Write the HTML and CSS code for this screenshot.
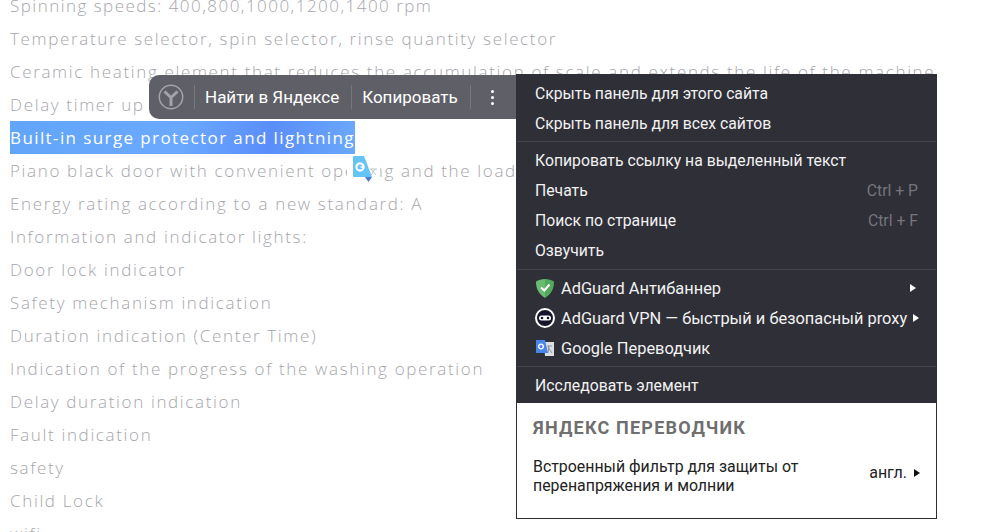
FILE: index.html
```html
<!DOCTYPE html>
<html lang="en">
<head>
<meta charset="utf-8">
<title>Washing machine features</title>
<link rel="stylesheet" href="styles.css">
</head>
<body>
<ul class="features">
<li><span class="tight">Spinning speeds: 400,800,1000,1200,1400 rpm</span></li>
<li>Temperature selector, spin selector, rinse quantity selector</li>
<li>Ceramic heating element that reduces the accumulation of scale and extends the life of the machine</li>
<li>Delay timer up to 24 hours</li>
<li><span class="selected">Built-in surge protector and lightning</span></li>
<li>Piano black door with convenient opening and the loading</li>
<li>Energy rating according to a new standard: A</li>
<li>Information and indicator lights:</li>
<li>Door lock indicator</li>
<li>Safety mechanism indication</li>
<li>Duration indication (Center Time)</li>
<li>Indication of the progress of the washing operation</li>
<li>Delay duration indication</li>
<li>Fault indication</li>
<li>safety</li>
<li>Child Lock</li>
<li>wifi</li>
</ul>

<div class="toolbar">
  <svg class="ya-logo" width="26" height="26" viewBox="0 0 26 26" aria-hidden="true">
    <circle cx="13" cy="13" r="11.7" fill="none" stroke="#a3a3a8" stroke-width="1.5"/>
    <path d="M6.5 7.5 L13 13.5 L19.5 7.5 M13 13.5 V22" fill="none" stroke="#a3a3a8" stroke-width="3"/>
  </svg>
  <span class="tool-sep"></span>
  <span class="tool-btn">Найти в Яндексе</span>
  <span class="tool-sep"></span>
  <span class="tool-btn">Копировать</span>
  <span class="tool-sep"></span>
  <span class="tool-dots"><i></i><i></i><i></i></span>
</div>

<svg class="gt-float" width="33" height="27" viewBox="-6 0 33 27" aria-hidden="true">
  <rect x="-6" y="0" width="33" height="27" fill="#fff"/>
  <path d="M0 1 Q0 0 1 0 H11 L19 21 H1 Q0 21 0 20 Z" fill="#63c4f5"/>
  <circle cx="7" cy="11" r="3.6" fill="none" stroke="#fff" stroke-width="2.2"/>
  <path d="M7.5 11 H11" stroke="#fff" stroke-width="1.5"/>
  <path d="M17 13 H24 M18 19 L22 13 M18 13 L23 19" stroke="#b9c4cc" stroke-width="1" fill="none"/>
  <path d="M12 21 H19 L15.5 26 Z" fill="#4f76d9"/>
</svg>

<div class="menu">
  <div class="menu-group">
    <div class="item">Скрыть панель для этого сайта</div>
    <div class="item">Скрыть панель для всех сайтов</div>
  </div>
  <div class="menu-group group-tall">
    <div class="item">Копировать ссылку на выделенный текст</div>
    <div class="item"><span>Печать</span><span class="shortcut">Ctrl + P</span></div>
    <div class="item"><span>Поиск по странице</span><span class="shortcut">Ctrl + F</span></div>
    <div class="item">Озвучить</div>
  </div>
  <div class="menu-group">
    <div class="item with-icon">
      <svg class="ico" width="20" height="20" viewBox="0 0 20 20" aria-hidden="true">
        <path d="M10 1 C6.5 1 3.5 2 1 3.5 C1 10 3 15.5 10 20 Z" fill="#68bc71"/>
        <path d="M10 1 C13.5 1 16.5 2 19 3.5 C19 10 17 15.5 10 20 Z" fill="#52a85c"/>
        <path d="M6 9.5 L9.3 12.5 L14.5 6.5" fill="none" stroke="#fff" stroke-width="2"/>
      </svg>
      <span class="grow">AdGuard Антибаннер</span><span class="arrow"></span>
    </div>
    <div class="item with-icon">
      <svg class="ico" width="20" height="20" viewBox="0 0 20 20" aria-hidden="true">
        <circle cx="10" cy="10" r="9" fill="#14142a" stroke="#fff" stroke-width="2"/>
        <rect x="4" y="7.5" width="12" height="5" rx="2.5" fill="#fff"/>
        <circle cx="7" cy="10" r="1.3" fill="#14142a"/>
        <circle cx="13" cy="10" r="1.3" fill="#14142a"/>
      </svg>
      <span class="grow">AdGuard VPN — быстрый и безопасный proxy</span><span class="arrow"></span>
    </div>
    <div class="item with-icon">
      <svg class="ico" width="20" height="20" viewBox="0 0 20 20" aria-hidden="true">
        <path d="M9 4 H19 V18 H10 Z" fill="#dcdfe2"/>
        <path d="M12 8 H17 M14 8 L13 15 M13 9 L17 15" stroke="#8c9499" stroke-width="1" fill="none"/>
        <path d="M1 2 H10 L13 15 H1 Z" fill="#4a86e8"/>
        <circle cx="6" cy="8.5" r="2.3" fill="none" stroke="#fff" stroke-width="1.3"/>
      </svg>
      <span class="grow">Google Переводчик</span>
    </div>
  </div>
  <div class="menu-group group-last">
    <div class="item">Исследовать элемент</div>
  </div>
  <div class="translator">
    <div class="tr-title">ЯНДЕКС ПЕРЕВОДЧИК</div>
    <div class="tr-body">
      <div class="tr-text">Встроенный фильтр для защиты от перенапряжения и молнии</div>
      <div class="tr-lang">англ.<span class="arrow arrow-dark"></span></div>
    </div>
  </div>
</div>
</body>
</html>
```

FILE: styles.css
```css
html, body {
  margin: 0;
  padding: 0;
  height: 532px;
  overflow: hidden;
  background: #fff;
}

.features {
  list-style: none;
  margin: -11px 0 0;
  padding: 0 0 0 10px;
  font-family: "Open Sans", sans-serif;
  font-size: 17px;
  font-weight: 300;
  line-height: 33px;
  letter-spacing: 1.65px;
  color: #a6a6ac;
  white-space: nowrap;
}

.tight { letter-spacing: 1.47px; }

.selected {
  display: inline-block;
  height: 33px;
  font-weight: 400;
  letter-spacing: 1.4px;
  color: #fff;
  background: linear-gradient(100deg, #62a5f8 0%, #6aa9ff 50%, #5a8dfa 75%, #6aa9fb 100%);
}

.toolbar {
  position: absolute;
  left: 149px;
  top: 75px;
  width: 367px;
  height: 44px;
  box-sizing: border-box;
  display: flex;
  align-items: center;
  padding-left: 9px;
  background: #5f5f67;
  border-radius: 10px 0 0 10px;
  font-family: Roboto, sans-serif;
  font-size: 17px;
  color: #fff;
}

.ya-logo { flex: none; }

.tool-sep {
  width: 1px;
  height: 24px;
  background: #77777e;
  margin-left: 10px;
}

.tool-btn {
  margin-left: 10px;
  padding-right: 2px;
  white-space: nowrap;
}

.tool-dots {
  display: flex;
  flex-direction: column;
  gap: 3px;
  margin-left: 20px;
}

.tool-dots i {
  display: block;
  width: 3px;
  height: 3px;
  background: #fff;
  border-radius: 50%;
}

.gt-float {
  position: absolute;
  left: 347px;
  top: 156px;
}

.menu {
  position: absolute;
  left: 516px;
  top: 74px;
  width: 421px;
  height: 445px;
  box-sizing: border-box;
  display: flex;
  flex-direction: column;
  border: 1px solid #2f2f38;
  background: #2f2f38;
  font-family: Roboto, sans-serif;
  font-size: 15.75px;
  color: #f2f2f2;
}

.menu-group {
  padding: 3px 0;
  border-bottom: 1px solid #45454e;
}

.group-tall { padding-bottom: 4px; }
.group-last { border-bottom: none; }

.item {
  height: 30px;
  display: flex;
  align-items: center;
  justify-content: space-between;
  padding: 0 18px;
  white-space: nowrap;
}

.with-icon { justify-content: flex-start; gap: 6px; font-size: 16.4px; }
.grow { flex: 1; }
.ico { flex: none; }

.shortcut { color: #75757c; }

.arrow {
  flex: none;
  width: 0;
  height: 0;
  border-left: 6px solid #fff;
  border-top: 4.5px solid transparent;
  border-bottom: 4.5px solid transparent;
  margin-right: 2px;
}

.arrow-dark { border-left-color: #111; margin: 0 0 0 7px; }

.translator {
  flex: 1;
  background: #fff;
  color: #222;
  padding: 0 16px;
}

.tr-title {
  padding-top: 14px;
  font-weight: 700;
  font-size: 18px;
  letter-spacing: 1.2px;
  color: #6f6f6f;
}

.tr-body {
  display: flex;
  align-items: flex-start;
  justify-content: space-between;
  margin-top: 19px;
}

.tr-text {
  width: 300px;
  font-size: 15.9px;
  line-height: 19px;
}

.tr-lang {
  display: flex;
  align-items: center;
  margin-top: 6px;
  font-size: 16px;
}
```
